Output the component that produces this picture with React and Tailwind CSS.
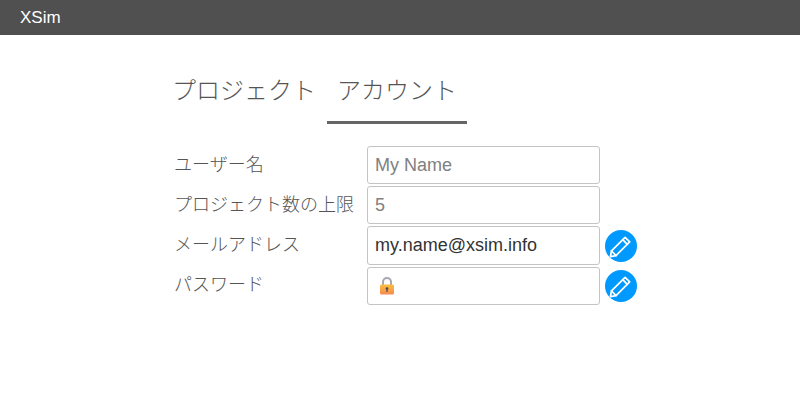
import React from "react";

const Pencil = () => (
  <svg viewBox="0 0 24 24" className="w-[26px] h-[26px]" fill="none" stroke="white" strokeWidth="1.6" strokeLinejoin="round" strokeLinecap="round">
    <path d="M3.2 16.6 15.8 4l4.2 4.2L7.4 20.8l-5.2 1 1-5.2Z" />
    <path d="M13.6 6.2l4.2 4.2" />
    <path d="M3.2 16.6l4.2 4.2" />
  </svg>
);

const Lock = () => (
  <svg viewBox="0 0 16 18" className="w-[16px] h-[18px]">
    <defs>
      <linearGradient id="lockBody" x1="0" y1="0" x2="0" y2="1">
        <stop offset="0" stopColor="#fbbf3c" />
        <stop offset="1" stopColor="#f58a52" />
      </linearGradient>
    </defs>
    <path d="M4 8V5a4 4 0 0 1 8 0v3" fill="none" stroke="#a9a5b4" strokeWidth="2" />
    <rect x="1" y="7.5" width="14" height="10" rx="1.5" fill="url(#lockBody)" />
    <circle cx="8" cy="11.5" r="1.3" fill="#4a4458" />
    <rect x="7.4" y="11.5" width="1.2" height="3.5" fill="#4a4458" />
  </svg>
);

const Row = ({ label, children, edit, h = "h-[38px]", pt = "pt-[6px]", mt = "mt-[3px]" }) => (
  <div className="flex items-start">
    <div className={`w-[194px] pl-px ${pt} text-[18px] leading-[26px] font-light text-[#555555] whitespace-nowrap`}>{label}</div>
    <div className={`w-[233px] ${h} border border-[#c4c4c4] rounded-[3px] bg-white flex items-center px-[7px] text-[18px] whitespace-nowrap`}>
      {children}
    </div>
    {edit && (
      <div className={`ml-[5px] ${mt} w-8 h-8 rounded-full bg-[#0099ff] flex items-center justify-center`}>
        <Pencil />
      </div>
    )}
  </div>
);

export default function App() {
  return (
    <div className="w-[800px] h-[400px] bg-white overflow-hidden font-['Liberation_Sans','Noto_Sans_CJK_JP',sans-serif]">
      <header className="h-[35px] bg-[#505050] flex items-center pl-5 text-white text-[17px]">XSim</header>
      <main className="pl-[163px]">
        <nav className="flex pt-[36px] text-[24px] font-light text-[#555555]">
          <div className="pl-[9px] pr-[11px] h-[53px] leading-[40px]">プロジェクト</div>
          <div className="px-[10px] h-[53px] leading-[40px] border-b-[3px] border-[#666666]">アカウント</div>
        </nav>
        <div className="pl-[10px] pt-[22px] flex flex-col gap-[2px]">
          <Row label="ユーザー名"><span className="text-[#808080]">My Name</span></Row>
          <Row label="プロジェクト数の上限"><span className="text-[#808080]">5</span></Row>
          <Row label="メールアドレス" edit h="h-[39px]" mt="mt-[4px]"><span className="text-[#333333]">my.name@xsim.info</span></Row>
          <Row label="パスワード" edit pt="pt-[5px]"><span className="pl-1 flex"><Lock /></span></Row>
        </div>
      </main>
    </div>
  );
}
